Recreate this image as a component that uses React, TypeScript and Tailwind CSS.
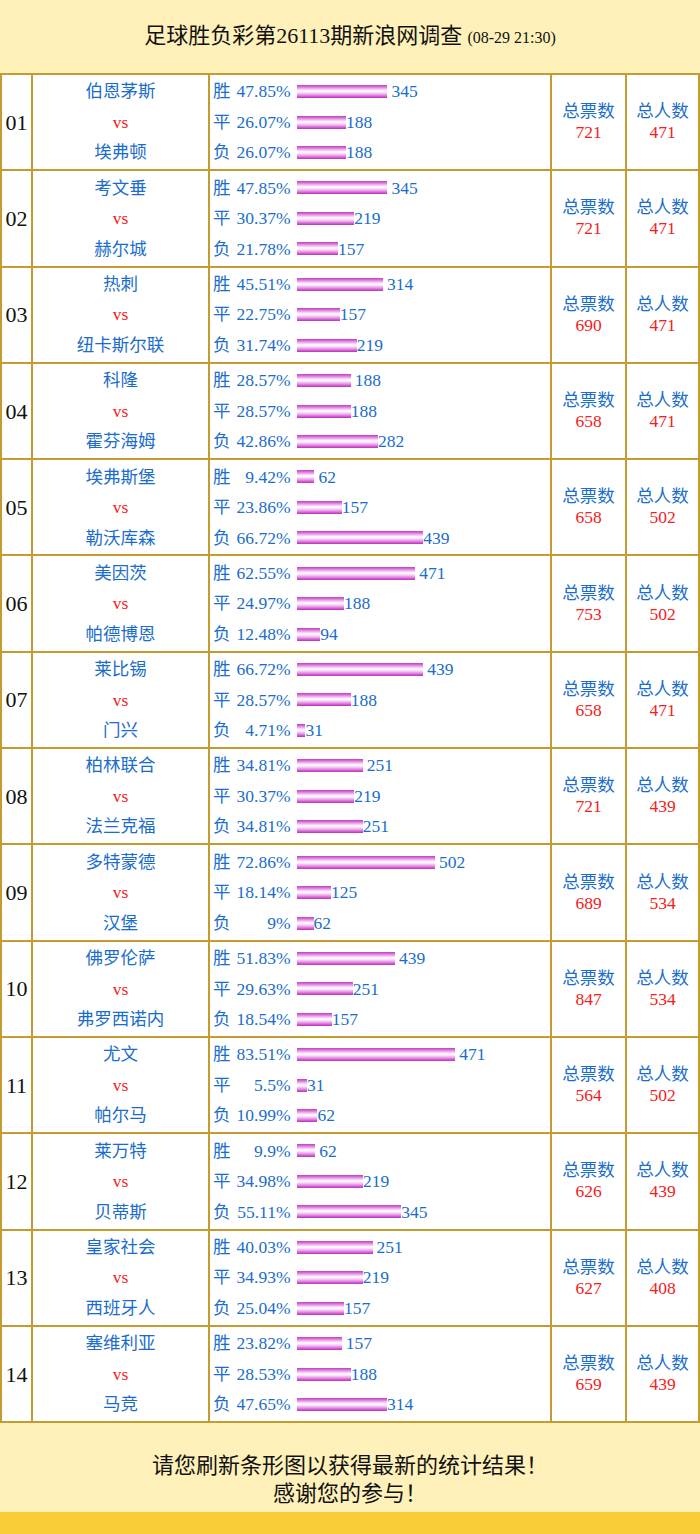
import React from "react";

type Line = [string, number];
type Match = { no: string; home: string; away: string; lines: [Line, Line, Line]; pct: [string, string, string]; votes: number; people: number };

const data: Match[] = [
  { no: "01", home: "伯恩茅斯", away: "埃弗顿", pct: ["47.85", "26.07", "26.07"], lines: [["胜", 345], ["平", 188], ["负", 188]], votes: 721, people: 471 },
  { no: "02", home: "考文垂", away: "赫尔城", pct: ["47.85", "30.37", "21.78"], lines: [["胜", 345], ["平", 219], ["负", 157]], votes: 721, people: 471 },
  { no: "03", home: "热刺", away: "纽卡斯尔联", pct: ["45.51", "22.75", "31.74"], lines: [["胜", 314], ["平", 157], ["负", 219]], votes: 690, people: 471 },
  { no: "04", home: "科隆", away: "霍芬海姆", pct: ["28.57", "28.57", "42.86"], lines: [["胜", 188], ["平", 188], ["负", 282]], votes: 658, people: 471 },
  { no: "05", home: "埃弗斯堡", away: "勒沃库森", pct: ["9.42", "23.86", "66.72"], lines: [["胜", 62], ["平", 157], ["负", 439]], votes: 658, people: 502 },
  { no: "06", home: "美因茨", away: "帕德博恩", pct: ["62.55", "24.97", "12.48"], lines: [["胜", 471], ["平", 188], ["负", 94]], votes: 753, people: 502 },
  { no: "07", home: "莱比锡", away: "门兴", pct: ["66.72", "28.57", "4.71"], lines: [["胜", 439], ["平", 188], ["负", 31]], votes: 658, people: 471 },
  { no: "08", home: "柏林联合", away: "法兰克福", pct: ["34.81", "30.37", "34.81"], lines: [["胜", 251], ["平", 219], ["负", 251]], votes: 721, people: 439 },
  { no: "09", home: "多特蒙德", away: "汉堡", pct: ["72.86", "18.14", "9"], lines: [["胜", 502], ["平", 125], ["负", 62]], votes: 689, people: 534 },
  { no: "10", home: "佛罗伦萨", away: "弗罗西诺内", pct: ["51.83", "29.63", "18.54"], lines: [["胜", 439], ["平", 251], ["负", 157]], votes: 847, people: 534 },
  { no: "11", home: "尤文", away: "帕尔马", pct: ["83.51", "5.5", "10.99"], lines: [["胜", 471], ["平", 31], ["负", 62]], votes: 564, people: 502 },
  { no: "12", home: "莱万特", away: "贝蒂斯", pct: ["9.9", "34.98", "55.11"], lines: [["胜", 62], ["平", 219], ["负", 345]], votes: 626, people: 439 },
  { no: "13", home: "皇家社会", away: "西班牙人", pct: ["40.03", "34.93", "25.04"], lines: [["胜", 251], ["平", 219], ["负", 157]], votes: 627, people: 408 },
  { no: "14", home: "塞维利亚", away: "马竞", pct: ["23.82", "28.53", "47.65"], lines: [["胜", 157], ["平", 188], ["负", 314]], votes: 659, people: 439 },
];

const font = "font-['Liberation_Serif','Noto_Sans_CJK_SC',serif]";

function Bar({ pct }: { pct: number }) {
  return (
    <span
      className="inline-block h-[13px] bg-[linear-gradient(to_bottom,#c43cc4_0%,#d668d6_12%,#eeb2ee_28%,#ffffff_45%,#fde8fd_55%,#eba6eb_72%,#d45cd4_88%,#b830b8_100%)]"
      style={{ width: `${pct * 1.9}px` }}
    />
  );
}

export default function App() {
  return (
    <div className={`w-[700px] ${font}`}>
      <div className="h-[73px] bg-[#fff1b9] flex items-center justify-center pb-[2px] text-[#111]">
        <span className="text-[22px] leading-none">足球胜负彩第26113期新浪网调查</span>
        <span className="text-[16px] leading-none ml-[5px] mt-[4px]">(08-29 21:30)</span>
      </div>
      <div className="grid grid-cols-[29px_175px_340px_73px_71px] gap-[2px] p-[2px] bg-[#c49b2e]">
        {data.map((m) => (
          <React.Fragment key={m.no}>
            <div className="h-[94.3px] bg-white flex items-center justify-center text-[22px] text-[#111]">{m.no}</div>
            <div className="h-[94.3px] bg-white flex flex-col items-center justify-center text-[17.5px] leading-[30.5px] text-[#1a6dcc]">
              <span>{m.home}</span>
              <span className="text-[#f42020]">vs</span>
              <span>{m.away}</span>
            </div>
            <div className="h-[94.3px] bg-white flex flex-col justify-center pl-[3px] text-[17.5px] leading-[30.5px] text-[#1a6dcc]">
              {m.lines.map(([label, n], i) => (
                <div key={label} className="flex items-center">
                  <span>{label}</span>
                  <span className="w-[60px] text-right">{m.pct[i]}%</span>
                  <span className="ml-[6px] flex items-center">
                    <Bar pct={parseFloat(m.pct[i])} />
                  </span>
                  <span className={i === 0 ? "ml-[4px]" : ""}>{n}</span>
                </div>
              ))}
            </div>
            <div className="h-[94.3px] bg-white flex flex-col items-center justify-center text-[17.5px] leading-[21px]">
              <span className="text-[#1a6dcc]">总票数</span>
              <span className="text-[#f42020]">{m.votes}</span>
            </div>
            <div className="h-[94.3px] bg-white flex flex-col items-center justify-center text-[17.5px] leading-[21px]">
              <span className="text-[#1a6dcc]">总人数</span>
              <span className="text-[#f42020]">{m.people}</span>
            </div>
          </React.Fragment>
        ))}
      </div>
      <div className="h-[89px] bg-[#fff1b9] pt-[29px] flex flex-col items-center text-[22px] leading-[28px] text-[#111]">
        <span>请您刷新条形图以获得最新的统计结果！</span>
        <span>感谢您的参与！</span>
      </div>
      <div className="h-[22px] bg-[#f9cb34]" />
    </div>
  );
}
